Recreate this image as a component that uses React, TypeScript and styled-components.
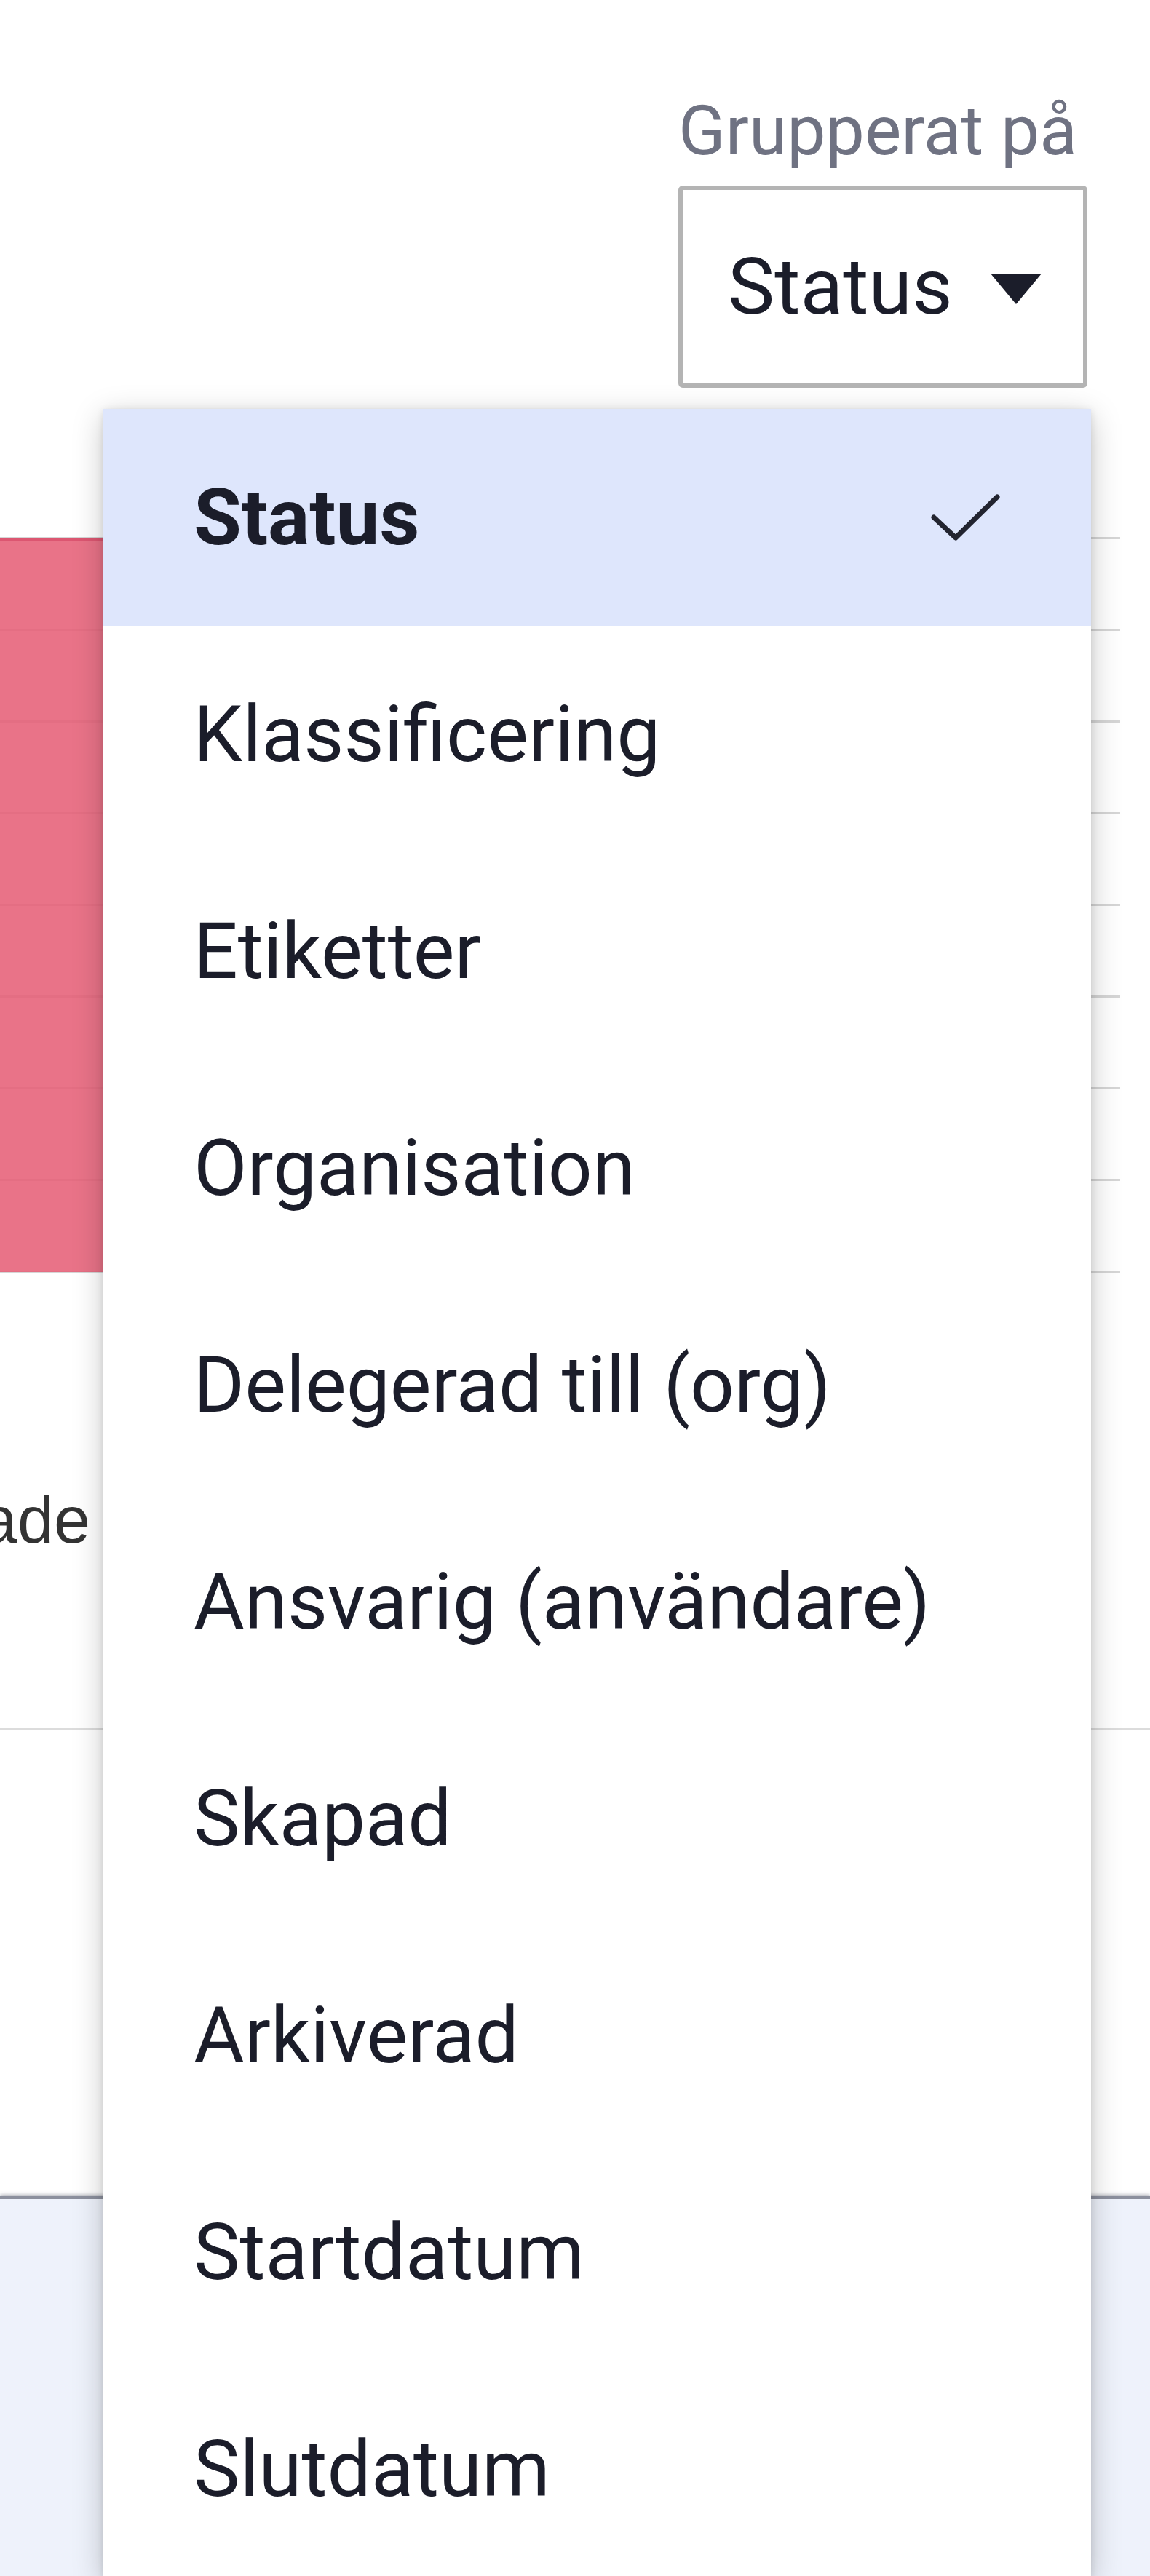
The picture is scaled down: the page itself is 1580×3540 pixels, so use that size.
import styled, { createGlobalStyle } from "styled-components";

const GlobalStyle = createGlobalStyle`
  html, body {
    margin: 0;
    padding: 0;
    background: #ffffff;
    font-family: Roboto, "Liberation Sans", Arial, sans-serif;
  }
`;

const groupOptions = [
  "Status",
  "Klassificering",
  "Etiketter",
  "Organisation",
  "Delegerad till (org)",
  "Ansvarig (användare)",
  "Skapad",
  "Arkiverad",
  "Startdatum",
  "Slutdatum",
];

const Page = styled.div`
  position: relative;
  height: 3540px;
  overflow: hidden;
  display: flex;
  flex-direction: column;
`;

const Header = styled.div`
  display: flex;
  justify-content: flex-end;
  padding: 132px 86px 0 0;
`;

const GroupField = styled.div`
  display: flex;
  flex-direction: column;
  width: 562px;
`;

const FieldLabel = styled.div`
  font-size: 95px;
  line-height: 95px;
  color: #6f7282;
  white-space: nowrap;
`;

const SelectBox = styled.div`
  margin-top: 28px;
  height: 278px;
  box-sizing: border-box;
  border: 6px solid #b4b4b4;
  border-radius: 6px;
  background: #ffffff;
  display: flex;
  align-items: center;
  justify-content: space-between;
  padding: 0 57px 0 62px;
  font-size: 108px;
  color: #1b1d2a;
`;

const Caret = styled.span`
  width: 0;
  height: 0;
  border-left: 35px solid transparent;
  border-right: 35px solid transparent;
  border-top: 42px solid #1b1d2a;
  margin-top: 6px;
`;

const Chart = styled.div`
  position: relative;
  margin: 205px 41px 0 0;
  border-top: 3px solid #d6d6d6;
`;

const GridRow = styled.div`
  height: 123px;
  border-bottom: 3px solid #d6d6d6;
`;

const Bar = styled.div`
  position: absolute;
  left: -200px;
  top: -1px;
  width: 900px;
  height: 1008px;
  box-sizing: border-box;
  background: rgba(230, 96, 120, 0.88);
  border-top: 4px solid #dc5671;
  border-right: 4px solid #dc5671;
`;

const Legend = styled.div`
  margin-top: 295px;
  width: 124px;
  display: flex;
  justify-content: flex-end;
  overflow: hidden;
`;

const LegendLabel = styled.span`
  font-family: "Liberation Sans", Arial, sans-serif;
  font-size: 90px;
  line-height: 90px;
  color: #333333;
  white-space: nowrap;
`;

const Divider = styled.div`
  margin-top: 240px;
  height: 3px;
  background: #dcdcdc;
`;

const Footer = styled.div`
  margin-top: 641px;
  flex: 1;
  background: #eef2fb;
  border-top: 4px solid #8c909e;
  box-shadow: 0 -2px 5px rgba(90, 95, 110, 0.45);
`;

const Menu = styled.ul`
  position: absolute;
  top: 562px;
  left: 142px;
  width: 1357px;
  margin: 0;
  padding: 0;
  list-style: none;
  background: #ffffff;
  box-shadow: 0 10px 40px rgba(0, 0, 0, 0.22), 0 2px 10px rgba(0, 0, 0, 0.12);
`;

const MenuItem = styled.li<{ $selected?: boolean }>`
  height: 298px;
  display: flex;
  align-items: center;
  justify-content: space-between;
  padding: 0 124px 0 124px;
  font-size: 107px;
  font-weight: ${(p) => (p.$selected ? 700 : 400)};
  color: #1b1d2a;
  background: ${(p) => (p.$selected ? "#dee6fc" : "#ffffff")};
  white-space: nowrap;
`;

const CheckIcon = () => (
  <svg width="96" height="64" viewBox="0 0 96 64" fill="none">
    <path
      d="M4 32 L34 60 L91 4"
      stroke="#222430"
      strokeWidth="7"
      strokeLinecap="round"
      strokeLinejoin="round"
    />
  </svg>
);

export default function App() {
  const selected = "Status";

  return (
    <Page>
      <GlobalStyle />
      <Header>
        <GroupField>
          <FieldLabel>Grupperat på</FieldLabel>
          <SelectBox>
            <span>{selected}</span>
            <Caret />
          </SelectBox>
        </GroupField>
      </Header>

      <Chart>
        {Array.from({ length: 8 }).map((_, i) => (
          <GridRow key={i} />
        ))}
        <Bar />
      </Chart>

      <Legend>
        <LegendLabel>Avslutade</LegendLabel>
      </Legend>

      <Divider />
      <Footer />

      <Menu>
        {groupOptions.map((option) => (
          <MenuItem key={option} $selected={option === selected}>
            <span>{option}</span>
            {option === selected && <CheckIcon />}
          </MenuItem>
        ))}
      </Menu>
    </Page>
  );
}
